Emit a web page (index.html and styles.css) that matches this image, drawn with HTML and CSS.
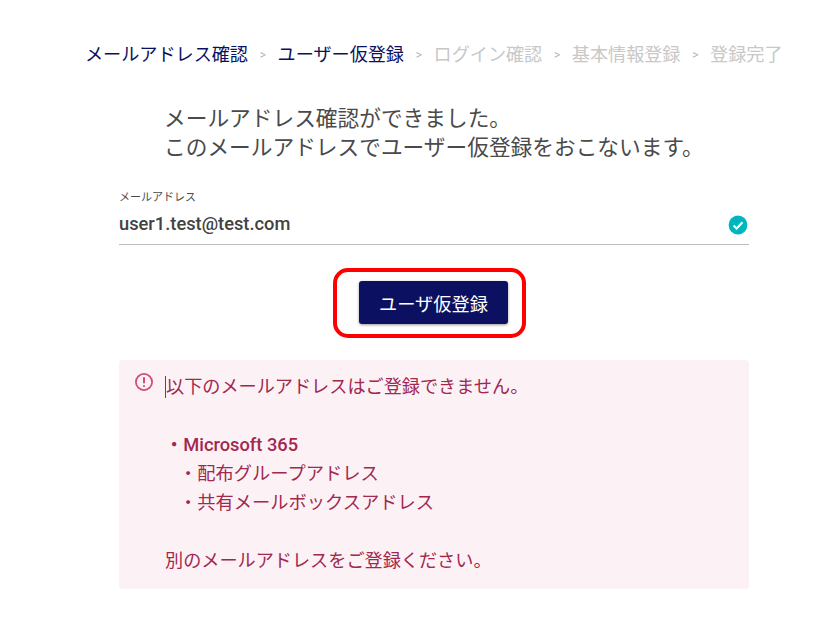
FILE: index.html
```html
<!DOCTYPE html>
<html lang="ja">
<head>
<meta charset="utf-8">
<title>ユーザー仮登録</title>
<link rel="stylesheet" href="styles.css">
</head>
<body>
<nav class="steps">
  <span class="step done">メールアドレス確認</span><span class="sep">&gt;</span>
  <span class="step done">ユーザー仮登録</span><span class="sep">&gt;</span>
  <span class="step">ログイン確認</span><span class="sep">&gt;</span>
  <span class="step">基本情報登録</span><span class="sep">&gt;</span>
  <span class="step">登録完了</span>
</nav>
<main class="main">
  <h1 class="lead">メールアドレス確認ができました。<br>このメールアドレスでユーザー仮登録をおこないます。</h1>
  <div class="field">
    <div class="field-label">メールアドレス</div>
    <div class="field-row">
      <span class="field-value">user1.test@test.com</span>
      <svg class="check" viewBox="0 0 20 20" width="20" height="20" aria-hidden="true">
        <circle cx="10" cy="10" r="9.4" fill="#00b5bd"/>
        <path d="M5.6 10.4l3 3 5.9-6.2" fill="none" stroke="#fff" stroke-width="2.1"/>
      </svg>
    </div>
  </div>
  <div class="action">
    <div class="highlight">
      <button class="submit" type="button">ユーザ仮登録</button>
    </div>
  </div>
  <section class="alert">
    <svg class="alert-icon" viewBox="0 0 20 20" width="20" height="20" aria-hidden="true">
      <circle cx="10" cy="10" r="8.1" fill="none" stroke="#d14d78" stroke-width="1.8"/>
      <path d="M10 5.2v6" stroke="#d14d78" stroke-width="2" fill="none"/>
      <circle cx="10" cy="14" r="1.1" fill="#d14d78"/>
    </svg>
    <div class="alert-body">
      <p class="alert-line caret">以下のメールアドレスはご登録できません。</p>
      <p class="alert-line blank"></p>
      <p class="alert-line bold">・Microsoft 365</p>
      <p class="alert-line indent">・配布グループアドレス</p>
      <p class="alert-line indent">・共有メールボックスアドレス</p>
      <p class="alert-line blank"></p>
      <p class="alert-line">別のメールアドレスをご登録ください。</p>
    </div>
  </section>
</main>
</body>
</html>
```
FILE: styles.css
```css
* { box-sizing: border-box; }
html, body { margin: 0; padding: 0; background: #fff; }
body {
  font-family: Roboto, "Noto Sans CJK JP", sans-serif;
  font-weight: 400;
  width: 816px;
  height: 639px;
  overflow: hidden;
}
.steps {
  display: flex;
  align-items: center;
  padding: 42px 0 0 85px;
  height: 67px;
  font-size: 18.12px;
  line-height: 26px;
  color: #c8c8c8;
  white-space: nowrap;
}
.step.done { color: #0b1160; }
.sep {
  width: 29.6px;
  text-align: center;
  font-size: 12px;
  color: #b5b5b5;
}
.main { margin-left: 119px; width: 630px; }
.lead {
  margin: 37px 0 0 45px;
  font-size: 21.7px;
  font-weight: 400;
  line-height: 29px;
  color: #4a4a4a;
  white-space: nowrap;
}
.field {
  margin-top: 28px;
  border-bottom: 1px solid #bdbdbd;
  height: 55px;
}
.field-label {
  font-size: 11px;
  line-height: 16px;
  color: #4a4a4a;
}
.field-row {
  display: flex;
  align-items: center;
  justify-content: space-between;
  height: 26px;
  margin-top: 4px;
}
.field-value {
  font-size: 18.3px;
  font-weight: 500;
  color: #424242;
}
.check { display: block; margin: 3px 1px 0 0; }
.action { margin-top: 23px; padding-left: 214px; }
.highlight {
  width: 193px;
  height: 70px;
  border: 4px solid #fe0000;
  border-radius: 15px;
  padding: 9px 0 0 22px;
}
.submit {
  display: block;
  width: 149px;
  height: 43px;
  padding: 0;
  border: 0;
  border-radius: 3px;
  background: #0b1160;
  color: #fff;
  font-family: inherit;
  font-size: 18.2px;
  font-weight: 400;
  box-shadow: 0 1px 3px rgba(0, 0, 0, .4);
}
.alert {
  display: flex;
  margin-top: 22px;
  height: 229px;
  padding: 12px 0 0 15px;
  background: #fcf2f6;
  border-radius: 4px;
  color: #a1284f;
}
.alert-icon { display: block; flex: none; }
.alert-body { margin-left: 11px; padding-top: 1px; }
.alert-line {
  margin: 0;
  font-size: 18.15px;
  line-height: 29px;
  white-space: nowrap;
}
.blank { height: 28.6px; }
.caret { border-left: 1px solid #a1284f; line-height: 22px; margin: 3px 0 3.6px; }
.bold { font-weight: 500; font-size: 18.3px; }
.indent { padding-left: 14px; font-size: 18.25px; }
```
